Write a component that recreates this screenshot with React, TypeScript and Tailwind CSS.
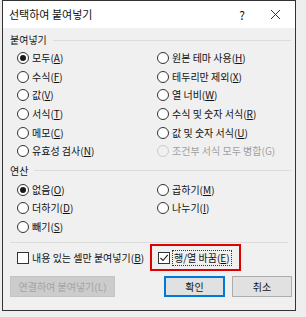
import React from "react";

type Opt = { label: string; key: string; checked?: boolean; disabled?: boolean };

const pasteLeft: Opt[] = [
  { label: "모두", key: "A", checked: true },
  { label: "수식", key: "F" },
  { label: "값", key: "V" },
  { label: "서식", key: "T" },
  { label: "메모", key: "C" },
  { label: "유효성 검사", key: "N" },
];

const pasteRight: Opt[] = [
  { label: "원본 테마 사용", key: "H" },
  { label: "테두리만 제외", key: "X" },
  { label: "열 너비", key: "W" },
  { label: "수식 및 숫자 서식", key: "R" },
  { label: "값 및 숫자 서식", key: "U" },
  { label: "조건부 서식 모두 병합", key: "G", disabled: true },
];

const opLeft: Opt[] = [
  { label: "없음", key: "O", checked: true },
  { label: "더하기", key: "D" },
  { label: "빼기", key: "S" },
];

const opRight: Opt[] = [
  { label: "곱하기", key: "M" },
  { label: "나누기", key: "I" },
];

const Radio = ({ checked, disabled }: { checked?: boolean; disabled?: boolean }) => (
  <span
    className={
      disabled
        ? "w-[12px] h-[12px] rounded-full border border-[#cccccc] bg-[#f0f0f0] flex items-center justify-center shrink-0"
        : "w-[12px] h-[12px] rounded-full border border-[#333333] bg-white flex items-center justify-center shrink-0"
    }
  >
    {checked && <span className="w-[6px] h-[6px] rounded-full bg-[#1a1a1a]" />}
  </span>
);

const Label = ({ text, k, disabled }: { text: string; k: string; disabled?: boolean }) => (
  <span className={disabled ? "text-[#a0a0a0] whitespace-nowrap" : "text-[#111111] whitespace-nowrap"}>
    {text}(<span className={disabled ? "" : "underline"}>{k}</span>)
  </span>
);

const RadioRow = ({ opt }: { opt: Opt }) => (
  <div className="h-[18.6px] flex items-center gap-[3px]">
    <Radio checked={opt.checked} disabled={opt.disabled} />
    <Label text={opt.label} k={opt.key} disabled={opt.disabled} />
  </div>
);

const GroupHeader = ({ title }: { title: string }) => (
  <div className="h-[16px] flex items-center gap-[6px] pl-[7px] pr-[4px]">
    <span className="text-[#111111] whitespace-nowrap">{title}</span>
    <div className="flex-1 h-px bg-[#dcdcdc]" />
  </div>
);

const Columns = ({ left, right }: { left: Opt[]; right: Opt[] }) => (
  <div className="flex pl-[14px]">
    <div className="w-[140px] flex flex-col">
      {left.map((o) => (
        <RadioRow key={o.key} opt={o} />
      ))}
    </div>
    <div className="flex-1 flex flex-col">
      {right.map((o) => (
        <RadioRow key={o.key} opt={o} />
      ))}
    </div>
  </div>
);

const CheckBox = ({ checked }: { checked?: boolean }) => (
  <span className="w-[12px] h-[12px] border border-[#333333] bg-white flex items-center justify-center shrink-0">
    {checked && (
      <svg width="10" height="10" viewBox="0 0 10 10">
        <polyline points="1.5,5 4,7.5 8.8,1.8" fill="none" stroke="#1a1a1a" strokeWidth="1.1" />
      </svg>
    )}
  </span>
);

export default function App() {
  return (
    <div className="w-[306px] h-[317px] bg-[#eeeeee] font-['Noto_Sans_CJK_KR',sans-serif] text-[10px] leading-none overflow-hidden">
      <div className="ml-[2px] w-[294px] h-[311px] border-[1.5px] border-[#333333] flex flex-col bg-[#f0f0f0]">
        {/* 제목 표시줄 */}
        <div className="h-[27px] bg-white flex items-center pl-[6px] pr-[12px] text-[11px]">
          <span className="flex-1 text-[#111111]">선택하여 붙여넣기</span>
          <span className="w-[20px] text-center text-[12px] text-[#111111] mr-[18px]">?</span>
          <svg width="11" height="11" viewBox="0 0 11 11" className="mr-[2px]">
            <path d="M1 1 L10 10 M10 1 L1 10" stroke="#333333" strokeWidth="1" />
          </svg>
        </div>

        <div className="flex-1 flex flex-col pt-[4px]">
          <GroupHeader title="붙여넣기" />
          <div className="mt-[1px]">
            <Columns left={pasteLeft} right={pasteRight} />
          </div>

          <div className="mt-[2px]">
            <GroupHeader title="연산" />
          </div>
          <div className="mt-[2px]">
            <Columns left={opLeft} right={opRight} />
          </div>

          <div className="mx-[7px] mt-[6px] h-px bg-[#dcdcdc]" />

          {/* 옵션 */}
          <div className="flex items-center pl-[14px] h-[29px]">
            <div className="w-[133px] flex items-center gap-[3px]">
              <CheckBox />
              <Label text="내용 있는 셀만 붙여넣기" k="B" />
            </div>
            <div className="h-[27px] border-2 border-[#e00000] flex items-center pl-[6px] pr-[7px] gap-[2px]">
              <CheckBox checked />
              <span className="border border-dotted border-[#333333] px-[1px] py-[2px]">
                <Label text="행/열 바꿈" k="E" />
              </span>
            </div>
          </div>

          {/* 버튼 */}
          <div className="flex items-center pl-[7px] pr-[3px] mt-[4px]">
            <div className="w-[105px] h-[21px] bg-[#cccccc] border border-[#c4c4c4] text-[#a3a3a3] flex items-center justify-center">
              연결하여 붙여넣기(L)
            </div>
            <div className="flex-1" />
            <div className="w-[61px] h-[21px] bg-[#e1e1e1] border-2 border-[#0078d7] text-[#111111] flex items-center justify-center">
              확인
            </div>
            <div className="w-[60px] h-[21px] ml-[7px] bg-[#e1e1e1] border border-[#adadad] text-[#111111] flex items-center justify-center">
              취소
            </div>
          </div>
        </div>
      </div>
    </div>
  );
}
